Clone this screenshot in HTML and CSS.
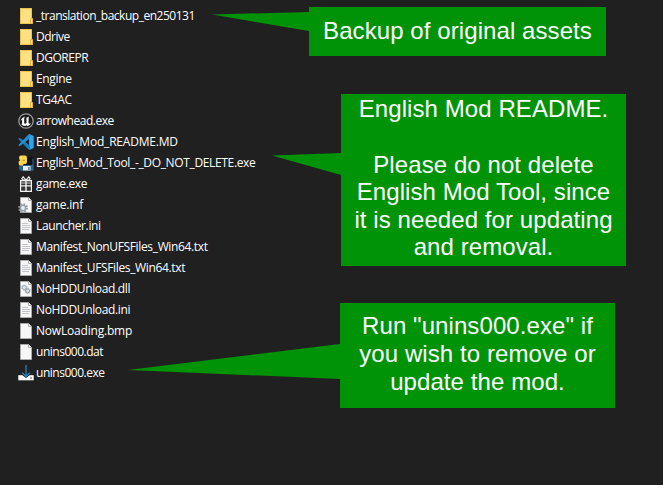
FILE: index.html
```html
<!DOCTYPE html>
<html lang="en">
<head>
<meta charset="utf-8">
<title>Mod files</title>
<link rel="stylesheet" href="styles.css">
</head>
<body>
<svg class="defs" aria-hidden="true">
  <symbol id="folder" viewBox="0 0 16 16">
    <path d="M2 0H13.5V11H15V15.5H13L2 15.8Z" fill="#ffe083"/>
    <path d="M2.5 .5H13.5V10.5M2.5 .5V15.5H12.5" fill="none" stroke="#eec34b"/>
    <path d="M12.5 10.5H14.5V15.5H12.5Z" fill="#ffe594" stroke="#e4b83c"/>
  </symbol>
  <symbol id="unreal" viewBox="0 0 16 16">
    <circle cx="8" cy="8" r="7.2" fill="#1a1a1a" stroke="#9a9a9a" stroke-width="1.3"/>
    <path d="M2.7 8.2C3.1 5.9 4.7 4.4 7.2 3.6Q6.2 4.4 6.2 5.6V10.3Q7.3 11.2 8.5 10V5.6L8 5L11.2 3.4Q10.6 4.2 10.6 5V10.2L11.3 10.8L13.1 9.8Q12 12.5 9.6 13.2L8.6 12.2L7 13Q4.4 12.9 3.3 11L4.1 10.5V6.8Q3.3 7.2 2.7 8.2Z" fill="#fff"/>
  </symbol>
  <symbol id="vscode" viewBox="0 0 16 16">
    <path d="M11 0L15.7 2V14L11 16Z" fill="#2ba5ec"/>
    <path d="M.3 5L1.7 3.8L12 11.8V16H11Z" fill="#147fc6"/>
    <path d="M.3 11L1.7 12.2L12 4.2V0H11Z" fill="#218dd5"/>
  </symbol>
  <symbol id="python" viewBox="0 0 16 16">
    <path d="M3 4H15.5V15.7H2.5L1 14V11Z" fill="#2e638c"/>
    <path d="M7 1.5H14.5V10H6Z" fill="#101317"/>
    <path d="M5 11H12.5V15.5H5Z" fill="#e9edf1"/>
    <path d="M10.2 12H11.7V15H10.2Z" fill="#5f7180"/>
    <path d="M1 3Q1 .6 3 .6H7Q9 .6 9 3V7Q9 9 7 9H5V10.5H2.5Q.7 10.5 .7 8.7V6H2Z" fill="#ffd447"/>
    <circle cx="3.3" cy="2.8" r=".8" fill="#fff6c0"/>
    <path d="M4.5 5.3H7" stroke="#b98f1c"/>
  </symbol>
  <symbol id="gift" viewBox="0 0 16 16">
    <path d="M2 4H14V16H2Z" fill="#f4f4f4"/>
    <path d="M3.2 5.2H7.3V9.2H3.2ZM8.7 5.2H12.8V9.2H8.7ZM3.2 10.5H7.3V14.7H3.2ZM8.7 10.5H12.8V14.7H8.7Z" fill="#333"/>
    <path d="M3.2 7H12.8" stroke="#ddd" stroke-width=".9"/>
    <path d="M8 4L5.2 .8L3.8 2.8L5 4ZM8 4L10.8 .8L12.2 2.8L11 4Z" fill="#333" stroke="#eee" stroke-width="1.1"/>
  </symbol>
  <symbol id="blank" viewBox="0 0 16 16">
    <path d="M2.5 .5H10.5L13.5 3.5V15.5H2.5Z" fill="#f7f7f7" stroke="#aaa"/>
    <path d="M10.5 .5V3.5H13.5" fill="#fff" stroke="#aaa"/>
  </symbol>
  <symbol id="text" viewBox="0 0 16 16">
    <use href="#blank"/>
    <path d="M4 5.5H10M4 7.5H12M4 9.5H12M4 11.5H11" stroke="#b3b8bc" stroke-width=".8"/>
  </symbol>
  <symbol id="inf" viewBox="0 0 16 16">
    <use href="#blank"/>
    <circle cx="5" cy="11" r="4.1" fill="none" stroke="#89949b" stroke-width="1.6" stroke-dasharray="1.6 1.62"/>
    <circle cx="5" cy="11" r="2.7" fill="#e9edef" stroke="#98a1a7" stroke-width="1.6"/>
  </symbol>
  <symbol id="dll" viewBox="0 0 16 16">
    <use href="#blank"/>
    <circle cx="6.3" cy="6.5" r="2" fill="#e4e8ea" stroke="#9ba5ab"/>
    <circle cx="6.3" cy="6.5" r="2.8" fill="none" stroke="#a5aeb4" stroke-width=".8" stroke-dasharray="1 1.2"/>
    <circle cx="9.6" cy="9.8" r="2" fill="#dce2e6" stroke="#8794a0"/>
    <circle cx="9.6" cy="9.8" r="2.8" fill="none" stroke="#8794a0" stroke-width=".8" stroke-dasharray="1 1.2"/>
  </symbol>
  <symbol id="setup" viewBox="0 0 16 16">
    <path d="M2 9.5H14L15.8 12H.2Z" fill="#303030"/>
    <path d="M.3 10.2H15.7V15.3H.3Z" fill="#fff"/>
    <path d="M3.5 9.5L8 13L12.5 9.5Z" fill="#202020"/>
    <path d="M12 13H14" stroke="#555"/>
    <path d="M8 0V12M4.2 7.6L8 11.5L11.8 7.6" fill="none" stroke="#2484bd" stroke-width="1.3"/>
  </symbol>
</svg>
<main class="window">
  <ul class="files">
    <li class="file tight"><svg class="icon"><use href="#folder"/></svg><span class="name">_translation_backup_en250131</span></li>
    <li class="file tight"><svg class="icon"><use href="#folder"/></svg><span class="name">Ddrive</span></li>
    <li class="file tight"><svg class="icon"><use href="#folder"/></svg><span class="name">DGOREPR</span></li>
    <li class="file"><svg class="icon"><use href="#folder"/></svg><span class="name">Engine</span></li>
    <li class="file"><svg class="icon"><use href="#folder"/></svg><span class="name">TG4AC</span></li>
    <li class="file tight"><svg class="icon"><use href="#unreal"/></svg><span class="name">arrowhead.exe</span></li>
    <li class="file loose"><svg class="icon"><use href="#vscode"/></svg><span class="name">English_Mod_README.MD</span></li>
    <li class="file"><svg class="icon"><use href="#python"/></svg><span class="name">English_Mod_Tool_-_DO_NOT_DELETE.exe</span></li>
    <li class="file"><svg class="icon"><use href="#gift"/></svg><span class="name">game.exe</span></li>
    <li class="file loose"><svg class="icon"><use href="#inf"/></svg><span class="name">game.inf</span></li>
    <li class="file"><svg class="icon"><use href="#text"/></svg><span class="name">Launcher.ini</span></li>
    <li class="file"><svg class="icon"><use href="#text"/></svg><span class="name">Manifest_NonUFSFiles_Win64.txt</span></li>
    <li class="file"><svg class="icon"><use href="#text"/></svg><span class="name">Manifest_UFSFiles_Win64.txt</span></li>
    <li class="file"><svg class="icon"><use href="#dll"/></svg><span class="name">NoHDDUnload.dll</span></li>
    <li class="file"><svg class="icon"><use href="#text"/></svg><span class="name">NoHDDUnload.ini</span></li>
    <li class="file loose"><svg class="icon"><use href="#blank"/></svg><span class="name">NowLoading.bmp</span></li>
    <li class="file tight"><svg class="icon"><use href="#blank"/></svg><span class="name">unins000.dat</span></li>
    <li class="file tight"><svg class="icon"><use href="#setup"/></svg><span class="name">unins000.exe</span></li>
  </ul>
  <div class="notes">
    <section class="note backup">
      <svg class="tail" viewBox="0 0 97 19"><path d="M0 2.5L97 0V19Z"/></svg>
      <p>Backup of original assets</p>
    </section>
    <section class="note readme">
      <svg class="tail" viewBox="0 0 69 22"><path d="M0 2.5L69 0V22Z"/></svg>
      <p>English Mod README.</p>
      <p>Please do not delete<br>English Mod Tool, since<br>it is needed for updating<br>and removal.</p>
    </section>
    <section class="note remove">
      <svg class="tail" viewBox="0 0 212 35"><path d="M0 26L212 0V35Z"/></svg>
      <p>Run "unins000.exe" if<br>you wish to remove or<br>update the mod.</p>
    </section>
  </div>
</main>
</body>
</html>
```
FILE: styles.css
```css
* { box-sizing: border-box; }

body {
  margin: 0;
  background: #202020;
  color: #fff;
}

.defs { position: absolute; width: 0; height: 0; }

.window {
  display: grid;
  grid-template-columns: 309px 1fr;
  width: 663px;
  height: 485px;
  overflow: hidden;
}

.files {
  margin: 0;
  padding: 5px 0 0 18px;
  list-style: none;
  font: 12px/21px "Open Sans", "Noto Sans", sans-serif;
  letter-spacing: -.35px;
}

.file {
  display: flex;
  align-items: center;
  gap: 2px;
  height: 21px;
  white-space: nowrap;
}

.tight { letter-spacing: -.48px; }
.loose { letter-spacing: -.2px; }

.icon { flex: none; width: 16px; height: 16px; margin-top: 1px; }

.notes {
  display: flex;
  flex-direction: column;
  align-items: flex-start;
  padding-top: 7px;
  font: 24px/27.6px "Liberation Sans", Arial, sans-serif;
  text-align: center;
  letter-spacing: .08px;
}

.note {
  position: relative;
  background: #009307;
  white-space: nowrap;
}

.note p { margin: 0; }
.note p + p { margin-top: 28px; }

.tail {
  position: absolute;
  right: 100%;
  fill: #009307;
}

.backup { width: 297px; height: 49px; padding-top: 10px; }
.backup .tail { top: 5px; width: 97px; height: 19px; }

.readme { width: 285px; height: 172px; margin: 38px 0 0 32px; padding-top: 1px; }
.readme .tail { top: 59px; width: 69px; height: 22px; }

.remove { width: 275px; height: 105px; margin: 37px 0 0 31px; padding-top: 9px; line-height: 28px; }
.remove .tail { top: 41px; width: 212px; height: 35px; }
```
